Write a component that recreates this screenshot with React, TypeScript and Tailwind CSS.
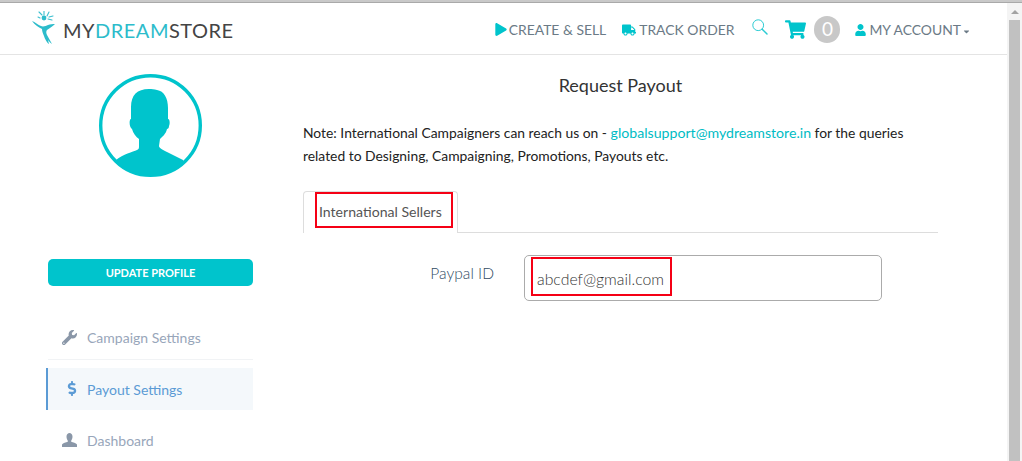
import { FaPlay, FaTruck, FaShoppingCart, FaUser, FaWrench, FaDollarSign, FaCaretDown } from "react-icons/fa";

const Logo = () => (
  <svg width="24" height="33" viewBox="0 0 24 33" className="block">
    <g stroke="#3bbfcf" strokeWidth="1.1" strokeLinecap="round">
      <path d="M7 1l3 3M12 0v4M17 1l-2 4M21 5l-4 1M20 9l-4-1M6 6l2 1" />
    </g>
    <circle cx="12" cy="7" r="2.4" fill="#2dbccb" />
    <path d="M0 10c3 1 6 4 9 5 2 1 5 0 7-1 2-1 5-1 7-1-2 2-5 4-8 6-1 1-1 3 0 5l5 9c-2-1-3-3-4-4l1 4c-2-1-4-5-5-8-1-2-2-5-2-7C6 16 3 14 0 10z" fill="#2dbccb" />
  </svg>
);

const Avatar = () => (
  <svg width="103" height="103" viewBox="0 0 103 103" className="block">
    <defs>
      <clipPath id="av"><circle cx="51.5" cy="51.5" r="49.5" /></clipPath>
    </defs>
    <circle cx="51.5" cy="51.5" r="49.8" fill="#fff" stroke="#00c4cc" strokeWidth="3.4" />
    <path
      clipPath="url(#av)"
      fill="#00c4cc"
      d="M32 33C32 21 38 15 50 15C53 15 55 15 58 16C65 17 69 24 69 34L69 45C71 45 71 50 70 52C70 54 69 55 68 55C67 60 63 63 61 65L60 72C60 74 64 76 68 78L84 86L84 104L17 104L17 86C24 80 34 78 38 76C40 75 40 74 40 72L40 65C37 63 34 59 33 55C31 54 30 49 31 46C31 45 32 45 32 45Z"
    />
  </svg>
);

const SearchGlyph = () => (
  <svg width="16" height="16" viewBox="0 0 16 16" fill="none" stroke="#2bcbd3" className="block mb-[5px] ml-[18px]">
    <circle cx="6.2" cy="6.2" r="5.4" strokeWidth="1" />
    <path d="M10.2 10.2L15 15" strokeWidth="1.5" strokeLinecap="round" />
  </svg>
);

const Bust = () => (
  <svg width="15" height="14" viewBox="0 0 15 14" className="block mb-[2px]" fill="#8a97a8">
    <path d="M4.5 3.5C4.5 1.3 6 0 7.5 0S10.5 1.3 10.5 3.5C10.5 5.5 9.7 7 9.2 7.8V8.8C11 9.6 14 10 15 11.5V14H0V11.5C1 10 4 9.6 5.8 8.8V7.8C5.3 7 4.5 5.5 4.5 3.5Z" />
  </svg>
);

const navText = "text-[13.9px] leading-none text-[#6b7a86]";

export default function App() {
  return (
    <div className="h-[461px] w-[1022px] overflow-hidden bg-white flex flex-col font-['Lato','Noto_Sans',sans-serif]">
      <div className="h-[3px] shrink-0 bg-[#c9c9c9] border-b border-[#a9a9a9]" />
      <div className="flex flex-1 min-h-0">
        <div className="w-[1007px] shrink-0 flex flex-col">
          <header className="h-[52px] shrink-0 border-b border-[#e4e4e4] flex items-center pl-[32px] pr-[36px]">
            <div className="flex items-center mt-[-2px]">
              <Logo />
              <span className="ml-[7px] mt-[5px] text-[20px] leading-none tracking-[0.5px] text-[#444]">
                MY<span className="text-[#2dbccb]">DREAM</span>STORE
              </span>
            </div>
            <nav className="ml-auto flex items-center pt-[2px]">
              <span className="flex items-center">
                <FaPlay className="text-[#00c4cc] w-[12px] h-[13px] mr-[2px]" />
                <span className={navText}>CREATE &amp; SELL</span>
              </span>
              <span className="flex items-center ml-[16px]">
                <FaTruck className="text-[#00c4cc] w-[14px] h-[12px] mr-[3px]" />
                <span className={navText}>TRACK ORDER</span>
              </span>
              <SearchGlyph />
              <FaShoppingCart className="text-[#00c4cc] w-[21px] h-[19px] ml-[17px]" />
              <span className="ml-[8px] w-[26px] h-[27px] rounded-full bg-[#c8c8c8] text-white flex items-center justify-center text-[19px]">0</span>
              <span className="flex items-center ml-[15px]">
                <FaUser className="text-[#00c4cc] w-[11px] h-[12px] mr-[3px]" />
                <span className={navText}>MY ACCOUNT</span>
                <FaCaretDown className="text-[#6b7a86] w-[9px] h-[9px] mt-[3px] ml-[1px]" />
              </span>
            </nav>
          </header>

          <div className="flex flex-1 min-h-0">
            <aside className="w-[207px] ml-[46px] shrink-0 flex flex-col">
              <div className="flex justify-center mt-[19px] pl-[1px]">
                <Avatar />
              </div>
              <button className="mt-[82px] ml-[2px] h-[27px] pt-[1px] rounded-[5px] bg-[#00c4cc] text-white text-[11px] font-bold flex items-center justify-center">
                UPDATE PROFILE
              </button>
              <div className="mt-[30px] ml-[2px] h-[44px] border-b border-[#f1f3f5] flex items-center pl-[14px] text-[#98a6ba] text-[14px]">
                <FaWrench className="w-[15px] h-[15px] text-[#8a97a8]" />
                <span className="ml-[10px]">Campaign Settings</span>
              </div>
              <div className="mt-[8px] h-[43px] pt-[2px] border-l-2 border-[#5b9bd5] bg-[#f4f8fb] flex items-center pl-[18px] text-[#5b9bd5] text-[14px]">
                <FaDollarSign className="w-[12px] h-[15px] mb-[3px]" />
                <span className="ml-[9px]">Payout Settings</span>
              </div>
              <div className="mt-[8px] ml-[2px] h-[43px] pt-[2px] flex items-center pl-[14px] text-[#98a6ba] text-[14px]">
                <Bust />
                <span className="ml-[10px]">Dashboard</span>
              </div>
            </aside>

            <main className="ml-[50px] w-[635px] shrink-0 flex flex-col">
              <h1 className="mt-[18px] text-center text-[18px] leading-[24px] font-normal text-[#333]">Request Payout</h1>
              <div className="mt-[24px] h-[47px] text-[13.87px] leading-[23px] text-[#222]">
                <p>
                  Note: International Campaigners can reach us on - <span className="text-[14.15px] text-[#00bcc4]">globalsupport@mydreamstore.in</span> for the queries
                </p>
                <p>related to Designing, Campaigning, Promotions, Payouts etc.</p>
              </div>
              <div className="mt-[23px] h-[42px] border-b border-[#dddddd] flex">
                <div className="relative w-[155px] h-[42px] pb-[2px] border border-b-0 border-[#dddddd] rounded-t-[4px] bg-white flex items-center pl-[15px] text-[14.1px] text-[#555]">
                  International Sellers
                  <span className="absolute left-[11px] top-[0px] w-[138px] h-[36px] border-2 border-[#f50015]" />
                </div>
              </div>
              <div className="mt-[22px] flex">
                <label className="w-[191px] pt-[7px] text-right text-[15.6px] leading-[22px] font-light text-[#2f4a63]">Paypal ID</label>
                <div className="relative ml-[30px] w-[358px] h-[46px] border border-[#ababab] rounded-[5px] flex items-center pl-[12px] pt-[1px] text-[15.8px] font-light text-[#333]">
                  abcdef@gmail.com
                  <span className="absolute left-[6px] top-[1px] w-[141px] h-[39px] border-2 border-[#f50015]" />
                </div>
              </div>
            </main>
          </div>
        </div>

        <div className="w-[15px] shrink-0 bg-[#f4f4f4] flex flex-col pl-[2px] pr-[2px]">
          <div className="h-[17px] flex items-center justify-center">
            <span className="w-0 h-0 border-l-[4px] border-r-[4px] border-b-[4px] border-l-transparent border-r-transparent border-b-[#a3a3a3]" />
          </div>
          <div className="w-full flex-1 bg-[#c1c1c1]" />
        </div>
      </div>
    </div>
  );
}
